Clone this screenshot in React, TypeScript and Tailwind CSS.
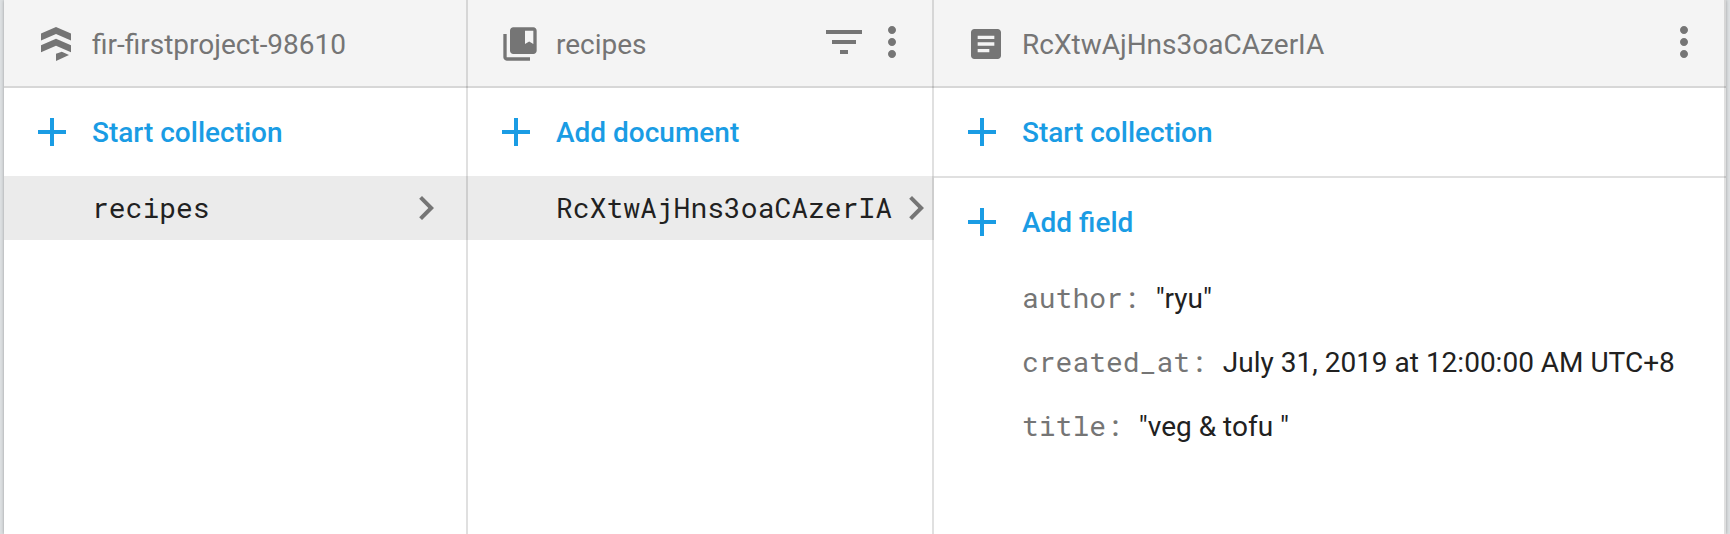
import type { ReactNode } from "react";

const ADD = "M19 13h-6v6h-2v-6H5v-2h6V5h2v6h6v2z";
const CHEVRON = "M10 6L8.59 7.41 13.17 12l-4.58 4.59L10 18l6-6z";
const MORE =
  "M12 8c1.1 0 2-.9 2-2s-.9-2-2-2-2 .9-2 2 .9 2 2 2zm0 2c-1.1 0-2 .9-2 2s.9 2 2 2 2-.9 2-2-.9-2-2-2zm0 6c-1.1 0-2 .9-2 2s.9 2 2 2 2-.9 2-2-.9-2-2-2z";
const FILTER = "M10 18h4v-2h-4v2zM3 6v2h18V6H3zm3 7h12v-2H6v2z";
const DATABASE = "M12 1.8L3 5.7v4.2l9-3.9 9 3.9V5.7zM12 8.8L3 12.7v4.3l9-4 9 4v-4.3zM12 17.9v4.3l7.8-3.6-4.3-2z";
const COLLECTION =
  "M4 6H2v14c0 1.1.9 2 2 2h14v-2H4V6zM20 2H8c-1.1 0-2 .9-2 2v12c0 1.1.9 2 2 2h12c1.1 0 2-.9 2-2V4c0-1.1-.9-2-2-2zm0 10l-2.5-1.5L15 12V4h5v8z";
const DOCUMENT =
  "M19 3H5c-1.1 0-2 .9-2 2v14c0 1.1.9 2 2 2h14c1.1 0 2-.9 2-2V5c0-1.1-.9-2-2-2zm-5 14H7v-2h7v2zm3-4H7v-2h10v2zm0-4H7V7h10v2z";

function Icon({ path, className }: { path: string; className: string }) {
  return (
    <svg viewBox="0 0 24 24" fill="currentColor" aria-hidden="true" className={`shrink-0 ${className}`}>
      <path d={path} />
    </svg>
  );
}

function IconButton({ path, label }: { path: string; label: string }) {
  return (
    <button type="button" aria-label={label}>
      <Icon path={path} className="size-12" />
    </button>
  );
}

function AddButton({ children }: { children: ReactNode }) {
  return (
    <button type="button" className="flex h-22 w-full items-center gap-4 pl-6 text-left font-medium text-[#1a9ce4]">
      <Icon path={ADD} className="size-12" />
      {children}
    </button>
  );
}

function SelectedItem({ children }: { children: ReactNode }) {
  return (
    <a
      href="#"
      className="flex h-16 items-center bg-[#ebebeb] pr-4.5 pl-22 font-['Roboto_Mono','Liberation_Mono',monospace] leading-8"
    >
      <span className="grow">{children}</span>
      <Icon path={CHEVRON} className="size-12 text-[#757575]" />
    </a>
  );
}

function Column({ icon, title, actions, children }: { icon: string; title: string; actions?: ReactNode; children: ReactNode }) {
  return (
    <section className="relative min-w-0 overflow-hidden after:absolute after:inset-y-0 after:right-0 after:w-0.5 after:bg-black/12">
      <header className="flex h-22 items-center gap-4 border-b-2 border-[#d7d7d7] bg-[#f4f4f4] pt-0.5 pr-4.5 pl-8 text-[#757575]">
        <Icon path={icon} className="size-10" />
        <h2 className="grow truncate">{title}</h2>
        <div className="mb-1 flex">{actions}</div>
      </header>
      {children}
    </section>
  );
}

const fields = [
  { name: "author", value: '"ryu"' },
  { name: "created_at", value: "July 31, 2019 at 12:00:00 AM UTC+8" },
  { name: "title", value: '"veg & tofu "' },
];

export default function App() {
  return (
    <div className="bg-[#dcdfe1] px-1 font-[Roboto,sans-serif] text-[28px] leading-[33px] text-[#212121]">
      <main className="grid min-h-screen grid-cols-[464fr_466fr_792fr] bg-white shadow-[0_0_3px_rgba(0,0,0,0.3)]">
        <Column icon={DATABASE} title="fir-firstproject-98610">
          <AddButton>Start collection</AddButton>
          <SelectedItem>recipes</SelectedItem>
        </Column>
        <Column
          icon={COLLECTION}
          title="recipes"
          actions={
            <>
              <IconButton path={FILTER} label="Filter" />
              <IconButton path={MORE} label="Collection menu" />
            </>
          }
        >
          <AddButton>Add document</AddButton>
          <SelectedItem>RcXtwAjHns3oaCAzerIA</SelectedItem>
        </Column>
        <Column icon={DOCUMENT} title="RcXtwAjHns3oaCAzerIA" actions={<IconButton path={MORE} label="Document menu" />}>
          <AddButton>Start collection</AddButton>
          <div className="border-t-2 border-[#e0e0e0]">
            <AddButton>Add field</AddButton>
            <dl className="pl-22">
              {fields.map((field) => (
                <div key={field.name} className="flex h-16 items-baseline gap-4 leading-16 whitespace-pre">
                  <dt className="font-['Roboto_Mono','Liberation_Mono',monospace] text-[#757575]">{field.name}:</dt>
                  <dd>{field.value}</dd>
                </div>
              ))}
            </dl>
          </div>
        </Column>
      </main>
    </div>
  );
}
